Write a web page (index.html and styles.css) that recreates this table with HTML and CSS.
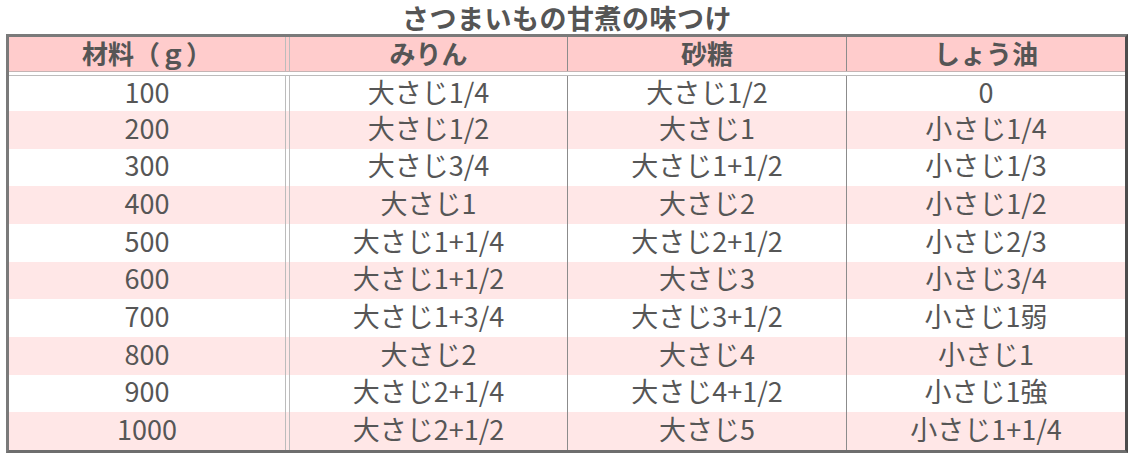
FILE: index.html
```html
<!DOCTYPE html>
<html lang="ja">
<head>
<meta charset="utf-8">
<title>さつまいもの甘煮の味つけ</title>
<link rel="stylesheet" href="styles.css">
</head>
<body>
<div class="page">
  <h1 class="title">さつまいもの甘煮の味つけ</h1>
  <div class="table">
    <div class="row head">
      <div class="cell c1">材料（ｇ）</div>
      <div class="cell c2">みりん</div>
      <div class="cell c3">砂糖</div>
      <div class="cell c4">しょう油</div>
    </div>
    <div class="body">
      <div class="row first">
        <div class="cell c1">100</div><div class="cell c2">大さじ1/4</div><div class="cell c3">大さじ1/2</div><div class="cell c4">0</div>
      </div>
      <div class="row alt">
        <div class="cell c1">200</div><div class="cell c2">大さじ1/2</div><div class="cell c3">大さじ1</div><div class="cell c4">小さじ1/4</div>
      </div>
      <div class="row">
        <div class="cell c1">300</div><div class="cell c2">大さじ3/4</div><div class="cell c3">大さじ1+1/2</div><div class="cell c4">小さじ1/3</div>
      </div>
      <div class="row alt">
        <div class="cell c1">400</div><div class="cell c2">大さじ1</div><div class="cell c3">大さじ2</div><div class="cell c4">小さじ1/2</div>
      </div>
      <div class="row">
        <div class="cell c1">500</div><div class="cell c2">大さじ1+1/4</div><div class="cell c3">大さじ2+1/2</div><div class="cell c4">小さじ2/3</div>
      </div>
      <div class="row alt">
        <div class="cell c1">600</div><div class="cell c2">大さじ1+1/2</div><div class="cell c3">大さじ3</div><div class="cell c4">小さじ3/4</div>
      </div>
      <div class="row">
        <div class="cell c1">700</div><div class="cell c2">大さじ1+3/4</div><div class="cell c3">大さじ3+1/2</div><div class="cell c4">小さじ1弱</div>
      </div>
      <div class="row alt">
        <div class="cell c1">800</div><div class="cell c2">大さじ2</div><div class="cell c3">大さじ4</div><div class="cell c4">小さじ1</div>
      </div>
      <div class="row">
        <div class="cell c1">900</div><div class="cell c2">大さじ2+1/4</div><div class="cell c3">大さじ4+1/2</div><div class="cell c4">小さじ1強</div>
      </div>
      <div class="row alt">
        <div class="cell c1">1000</div><div class="cell c2">大さじ2+1/2</div><div class="cell c3">大さじ5</div><div class="cell c4">小さじ1+1/4</div>
      </div>
    </div>
  </div>
</div>
</body>
</html>
```

FILE: styles.css
```css
html, body {
  margin: 0;
  padding: 0;
  background: #ffffff;
}

.page {
  width: 1134px;
  color: #565656;
  font-family: "Noto Sans CJK JP", sans-serif;
}

.title {
  margin: 0;
  height: 34px;
  line-height: 36px;
  text-align: center;
  font-family: "Noto Sans CJK JP", sans-serif;
  font-weight: 700;
  font-size: 27px;
  color: #555555;
  letter-spacing: 0.5px;
  overflow: visible;
}

.table {
  margin-left: 6px;
  width: 1122px;
  box-sizing: border-box;
  border: 3px solid #7a7a7a;
  border-right-color: #4c4c4c;
  border-bottom-color: #6e6e6e;
}

.row {
  display: flex;
  min-height: 0;
}

.cell {
  display: flex;
  align-items: center;
  justify-content: center;
  box-sizing: border-box;
  font-size: 27px;
  line-height: 1;
  white-space: nowrap;
  font-weight: 400;
  padding-bottom: 5px;
}

.c1 {
  width: 277px;
  border-right: 1px solid #bcbcbc;
}

.c2 {
  width: 279px;
  margin-left: 3px;
  border-left: 1px solid #bcbcbc;
  border-right: 1px solid #8c8c8c;
}

.c3 {
  width: 279px;
  border-right: 1px solid #8c8c8c;
}

.c4 {
  width: 278px;
}

.head {
  height: 35px;
  background: #ffcccc;
  border-bottom: 1px solid #c4b4b4;
  box-sizing: border-box;
}

.head .cell {
  font-weight: 700;
  font-size: 26px;
  color: #555555;
  padding-bottom: 3px;
}

.body {
  display: grid;
  grid-template-rows: 39px repeat(9, minmax(0, 1fr));
  height: 378px;
}

.first {
  background: linear-gradient(to bottom, #ffffff 0 3px, #bcbcbc 3px 4px, #ffffff 4px);
  padding-top: 4px;
}

.alt {
  background: #ffe7e7;
}
```
